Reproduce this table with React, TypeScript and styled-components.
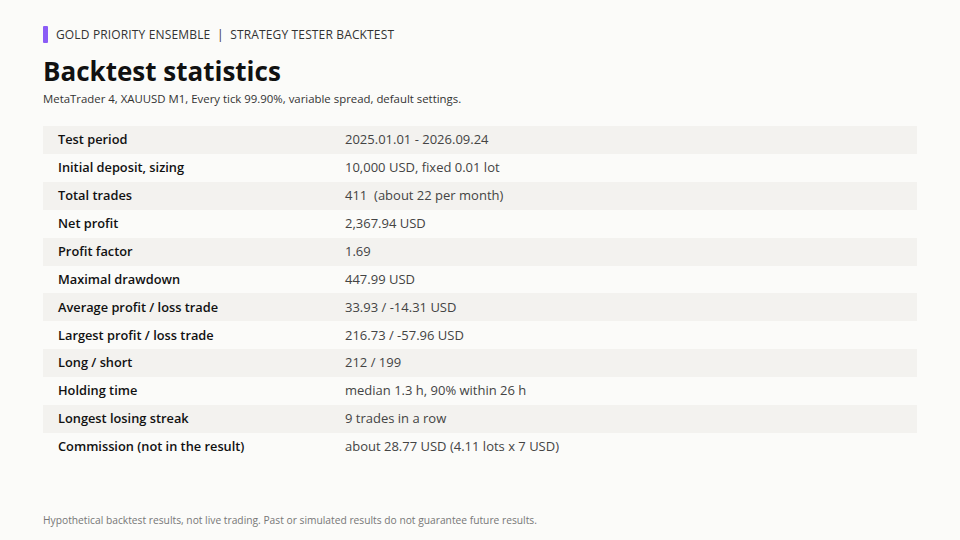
import React from "react";
import styled, { createGlobalStyle } from "styled-components";

const Global = createGlobalStyle`
  html, body { margin: 0; padding: 0; background: #fbfbf9; }
  body { font-family: "Open Sans", "Noto Sans", sans-serif; color: #1a1a1a; }
`;

const Page = styled.div`
  width: 960px;
  height: 540px;
  box-sizing: border-box;
  padding: 26px 43px 0 43px;
  display: flex;
  flex-direction: column;
`;

const Kicker = styled.div`
  display: flex;
  align-items: center;
  gap: 8px;
  height: 17px;
  font-size: 12px;
  color: #333;
  letter-spacing: 0.15px;
`;

const Accent = styled.span`
  width: 5px;
  height: 17px;
  border-radius: 1px;
  background: #8b5cf6;
`;

const Title = styled.h1`
  margin: 10px 0 0 0;
  font-size: 26px;
  line-height: 36px;
  font-weight: 700;
  color: #111;
`;

const Subtitle = styled.p`
  margin: 2px 0 0 0;
  font-size: 11.4px;
  line-height: 16px;
  color: #333;
`;

const Table = styled.div`
  margin-top: 19px;
  display: flex;
  flex-direction: column;
  width: 874px;
`;

const Row = styled.div<{ $shaded: boolean }>`
  display: grid;
  grid-template-columns: 287px 1fr;
  height: 27.92px;
  align-items: center;
  padding-left: 15px;
  padding-bottom: 1.5px;
  box-sizing: border-box;
  background: ${(p) => (p.$shaded ? "#f3f2ef" : "transparent")};
`;

const Label = styled.span`
  font-size: 12.8px;
  font-weight: 600;
  color: #111;
`;

const Value = styled.span`
  font-size: 13px;
  color: #444;
  white-space: pre;
`;

const Footer = styled.div`
  margin-top: auto;
  margin-bottom: 13px;
  font-size: 10.25px;
  color: #777;
`;

const rows: [string, string][] = [
  ["Test period", "2025.01.01 - 2026.09.24"],
  ["Initial deposit, sizing", "10,000 USD, fixed 0.01 lot"],
  ["Total trades", "411  (about 22 per month)"],
  ["Net profit", "2,367.94 USD"],
  ["Profit factor", "1.69"],
  ["Maximal drawdown", "447.99 USD"],
  ["Average profit / loss trade", "33.93 / -14.31 USD"],
  ["Largest profit / loss trade", "216.73 / -57.96 USD"],
  ["Long / short", "212 / 199"],
  ["Holding time", "median 1.3 h, 90% within 26 h"],
  ["Longest losing streak", "9 trades in a row"],
  ["Commission (not in the result)", "about 28.77 USD (4.11 lots x 7 USD)"],
];

export default function App() {
  return (
    <>
      <Global />
      <Page>
        <Kicker>
          <Accent />
          <span>GOLD PRIORITY ENSEMBLE&nbsp; | &nbsp;STRATEGY TESTER BACKTEST</span>
        </Kicker>
        <Title>Backtest statistics</Title>
        <Subtitle>
          MetaTrader 4, XAUUSD M1, Every tick 99.90%, variable spread, default settings.
        </Subtitle>
        <Table>
          {rows.map(([k, v], i) => (
            <Row key={k} $shaded={i % 2 === 0}>
              <Label>{k}</Label>
              <Value>{v}</Value>
            </Row>
          ))}
        </Table>
        <Footer>
          Hypothetical backtest results, not live trading. Past or simulated results do not guarantee future results.
        </Footer>
      </Page>
    </>
  );
}
